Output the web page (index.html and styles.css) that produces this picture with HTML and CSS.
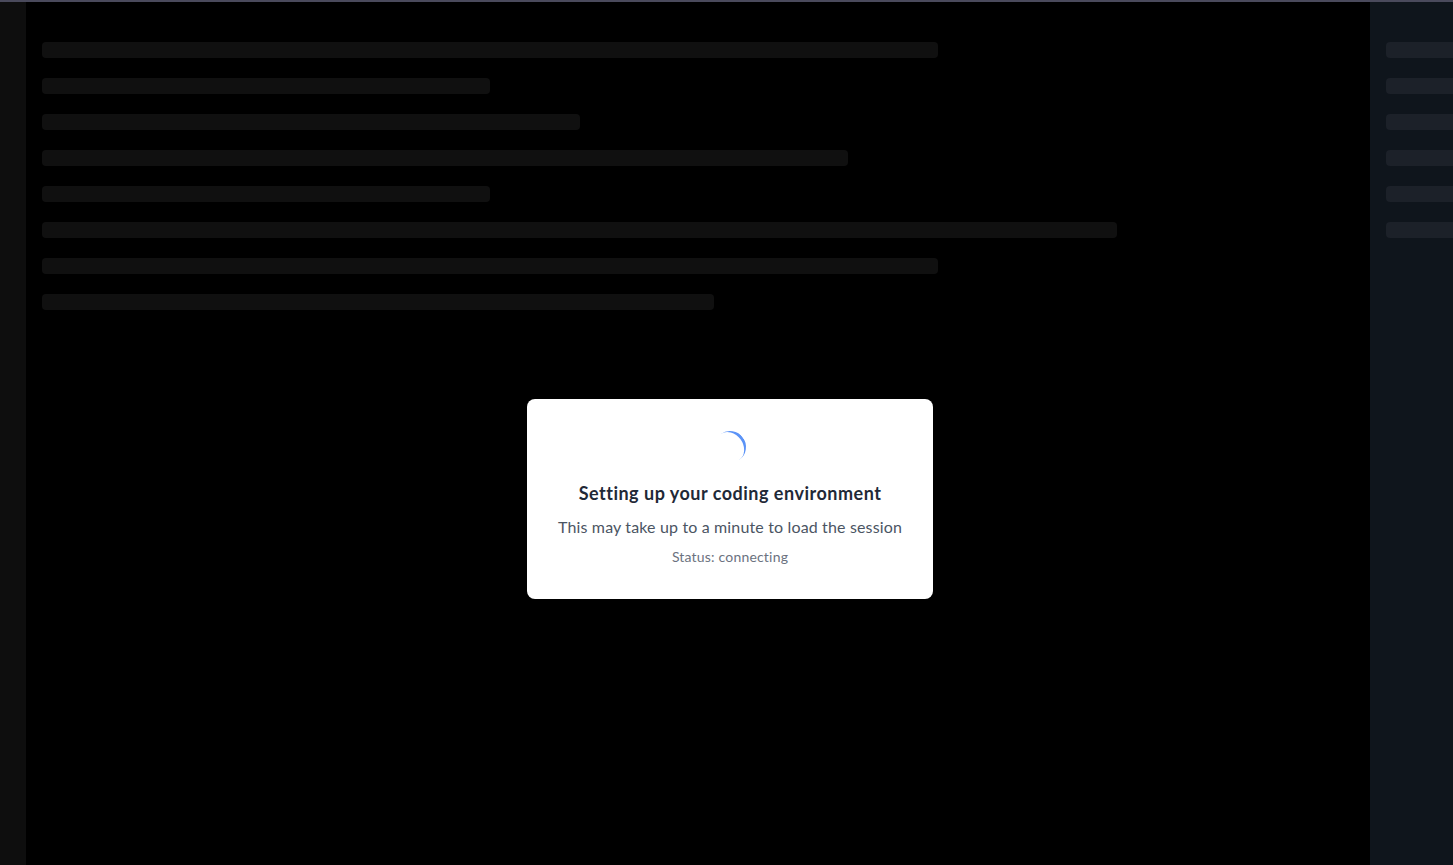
FILE: index.html
```html
<!DOCTYPE html>
<html lang="en">
<head>
<meta charset="utf-8">
<title>Setting up your coding environment</title>
<link rel="stylesheet" href="styles.css">
</head>
<body>
<div class="app">
  <div class="topbar"></div>
  <div class="workspace">
    <aside class="rail"></aside>
    <main class="editor">
      <div class="line w-2-3"></div>
      <div class="line w-1-3"></div>
      <div class="line w-40"></div>
      <div class="line w-60"></div>
      <div class="line w-1-3"></div>
      <div class="line w-80"></div>
      <div class="line w-2-3"></div>
      <div class="line w-50"></div>
    </main>
    <aside class="side">
      <div class="side-line"></div>
      <div class="side-line"></div>
      <div class="side-line"></div>
      <div class="side-line"></div>
      <div class="side-line"></div>
      <div class="side-line"></div>
    </aside>
  </div>
  <div class="modal">
    <div class="spinner"></div>
    <h1 class="title">Setting up your coding environment</h1>
    <p class="sub">This may take up to a minute to load the session</p>
    <p class="status">Status: connecting</p>
  </div>
</div>
</body>
</html>
```
FILE: styles.css
```css
* { box-sizing: border-box; }
html, body { margin: 0; height: 100%; overflow: hidden; background: #000; }
body { font-family: "Lato", "Noto Sans", sans-serif; }
.app { position: relative; height: 865px; display: flex; flex-direction: column; }
.topbar { height: 2px; background: #4a4a5c; flex: none; }
.workspace { flex: 1; display: flex; min-height: 0; overflow: hidden; }
.rail { width: 26px; flex: none; background: #0e0e0e; }
.editor { width: 1344px; flex: none; background: #000; padding-top: 40px; display: flex; flex-direction: column; gap: 20px; }
.line { height: 16px; margin-left: 16px; border-radius: 4px; background: #101010; flex: none; }
.w-2-3 { width: 896px; }
.w-1-3 { width: 448px; }
.w-40 { width: 538px; }
.w-60 { width: 806px; }
.w-80 { width: 1075px; }
.w-50 { width: 672px; }
.side { flex: 1; min-width: 0; background: #0f151c; padding: 40px 0 0 16px; display: flex; flex-direction: column; gap: 20px; overflow: hidden; }
.side-line { height: 16px; width: 100px; flex: none; border-radius: 4px; background: #1c2129; }
.modal { position: absolute; left: 527px; top: 399px; width: 406px; height: 200px; background: #fff; border-radius: 8px; padding-top: 32px; text-align: center; display: flex; flex-direction: column; align-items: center; }
.spinner { width: 32px; height: 32px; border-radius: 50%; border-bottom: 3px solid #5b93f7; transform: rotate(234deg); flex: none; }
.title { margin: 16px 0 0; font-size: 18px; line-height: 28px; font-weight: 700; color: #1f2937; white-space: nowrap; letter-spacing: 0.5px; }
.sub { margin: 8px 0 0; font-size: 16px; line-height: 24px; color: #4b5563; white-space: nowrap; letter-spacing: 0.15px; }
.status { margin: 8px 0 0; font-size: 14px; line-height: 20px; color: #6b7280; white-space: nowrap; letter-spacing: 0.19px; }
```
